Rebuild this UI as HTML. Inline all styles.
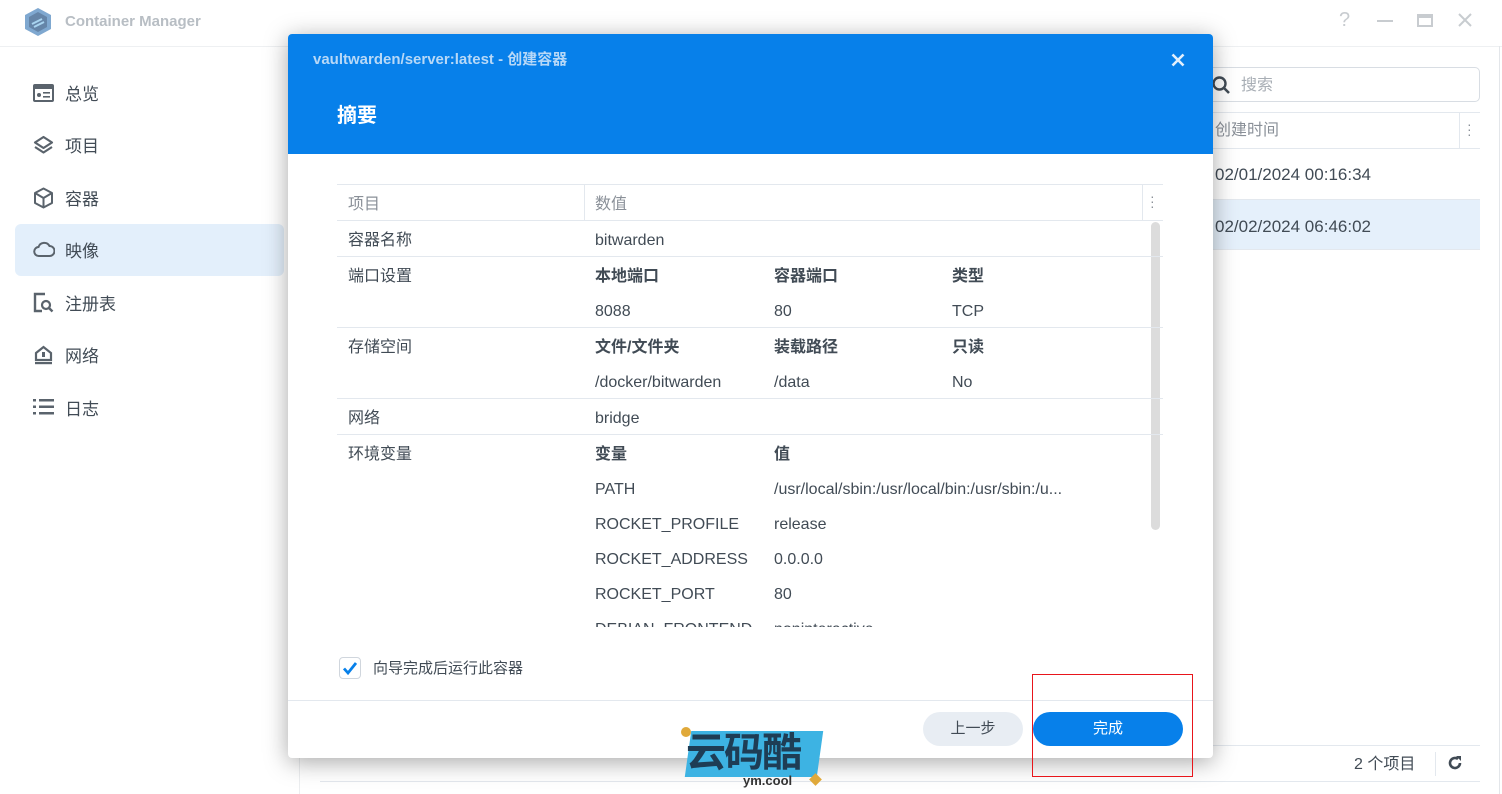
<!DOCTYPE html>
<html><head><meta charset="utf-8">
<style>
*{margin:0;padding:0;box-sizing:border-box}
body{width:1502px;height:794px;overflow:hidden;background:#fff;font-family:"Liberation Sans","Noto Sans CJK SC",sans-serif;color:#414b55;position:relative}
.a{position:absolute;white-space:nowrap}
.nav{position:absolute;left:65px;font-size:17px;color:#414b55;line-height:22px;transform:translateY(2px)}
.ic{position:absolute;left:33px}
.t{position:absolute;font-size:16px;color:#414b55;white-space:nowrap;line-height:20px;transform:translateY(2px)}
.b{font-weight:bold}
.hl{position:absolute;left:337px;width:826px;height:1px;background:#e3e8ee}
</style></head><body>
<!-- title bar -->
<svg class="a" style="left:24px;top:7px" width="28" height="30" viewBox="0 0 28 30"><polygon points="14,1 27,8 27,22 14,29 1,22 1,8" fill="#7fa8d0"/><polygon points="14,5 23,10 23,20 14,25 5,20 5,10" fill="#6585a8"/><path d="M8 17 L18 12 M10 20 L20 15" stroke="#a8d4f0" stroke-width="2"/></svg>
<div class="a" style="left:65px;top:13px;font-size:15px;font-weight:bold;color:#b8bec4">Container Manager</div>
<div class="a" style="left:1339px;top:9px;font-size:20px;color:#c8ccd0">?</div>
<div class="a" style="left:1377px;top:20px;width:16px;height:2px;background:#c8ccd0"></div>
<div class="a" style="left:1417px;top:14px;width:16px;height:13px;border:2px solid #c8ccd0;border-top-width:4px"></div>
<svg class="a" style="left:1458px;top:13px" width="14" height="14"><path d="M1 1L13 13M13 1L1 13" stroke="#c8ccd0" stroke-width="2"/></svg>
<div class="a" style="left:0;top:46px;width:1502px;height:1px;background:#eef0f2"></div>
<div class="a" style="left:1499px;top:46px;width:1px;height:748px;background:#e3e6ea"></div>
<!-- sidebar -->
<div class="a" style="left:15px;top:224px;width:269px;height:52px;background:#e3effb;border-radius:6px"></div>
<svg class="ic" style="top:84px" width="21" height="18"><rect x="0" y="0" width="21" height="18" rx="2" fill="#5a636c"/><rect x="2" y="5" width="17" height="11" fill="#fff"/><circle cx="6" cy="11" r="2" fill="#5a636c"/><rect x="10" y="8" width="7" height="1.6" fill="#5a636c"/><rect x="10" y="12" width="7" height="1.6" fill="#5a636c"/></svg>
<div class="nav" style="top:82px">总览</div>
<svg class="ic" style="top:135px" width="21" height="20"><path d="M10.5 2L19 7.5 10.5 13 2 7.5Z" fill="none" stroke="#5a636c" stroke-width="2.2" stroke-linejoin="round"/><path d="M2 12L10.5 17.5 19 12" fill="none" stroke="#5a636c" stroke-width="2.2" stroke-linejoin="round"/></svg>
<div class="nav" style="top:134px">项目</div>
<svg class="ic" style="top:187px" width="21" height="22"><path d="M10.5 1.5L19 6v10l-8.5 4.5L2 16V6Z M2 6l8.5 5 8.5-5 M10.5 11v9.5" fill="none" stroke="#5a636c" stroke-width="2" stroke-linejoin="round"/></svg>
<div class="nav" style="top:187px">容器</div>
<svg class="ic" style="top:240px" width="22" height="18"><path d="M6 16a4.5 4.5 0 0 1-0.5-9A6 6 0 0 1 16.5 6a4.8 4.8 0 0 1 0 10Z" fill="none" stroke="#5a636c" stroke-width="2"/></svg>
<div class="nav" style="top:239px">映像</div>
<svg class="ic" style="top:292px" width="21" height="21"><path d="M12 2H2v17h7" fill="none" stroke="#5a636c" stroke-width="2.4"/><circle cx="13" cy="13" r="4" fill="none" stroke="#5a636c" stroke-width="2.2"/><path d="M16 16l3.5 3.5" stroke="#5a636c" stroke-width="2.4"/></svg>
<div class="nav" style="top:292px">注册表</div>
<svg class="ic" style="top:344px" width="21" height="21"><path d="M3 9L10.5 3 18 9v7H3Z" fill="none" stroke="#5a636c" stroke-width="2.2"/><rect x="9" y="8" width="3" height="5" fill="#5a636c"/><rect x="2" y="18" width="17" height="2.2" fill="#5a636c"/></svg>
<div class="nav" style="top:344px">网络</div>
<svg class="ic" style="top:399px" width="21" height="16"><g fill="#5a636c"><rect x="0" y="0" width="3" height="2.5"/><rect x="6" y="0" width="15" height="2.5"/><rect x="0" y="6.5" width="3" height="2.5"/><rect x="6" y="6.5" width="15" height="2.5"/><rect x="0" y="13" width="3" height="2.5"/><rect x="6" y="13" width="15" height="2.5"/></g></svg>
<div class="nav" style="top:397px">日志</div>
<div class="a" style="left:299px;top:46px;width:1px;height:748px;background:#eceef0"></div>
<!-- right background content -->
<div class="a" style="left:1180px;top:67px;width:300px;height:35px;border:1px solid #d8dde3;border-radius:5px"></div>
<svg class="a" style="left:1212px;top:76px" width="18" height="18"><circle cx="7.5" cy="7.5" r="6" fill="none" stroke="#414b55" stroke-width="2.4"/><path d="M12 12l5 5" stroke="#414b55" stroke-width="2.6"/></svg>
<div class="t" style="left:1241px;top:74px;color:#a8aeb5">搜索</div>
<div class="a" style="left:1180px;top:112px;width:300px;height:1px;background:#e3e8ee"></div>
<div class="t" style="left:1215px;top:119px;color:#8a9098">创建时间</div>
<div class="a" style="left:1459px;top:113px;width:1px;height:35px;background:#e3e8ee"></div>
<div class="a" style="left:1467px;top:122px;font-size:14px;color:#8a9098;line-height:5px">·<br>·<br>·</div>
<div class="a" style="left:1180px;top:148px;width:300px;height:1px;background:#e3e8ee"></div>
<div class="a" style="left:1215px;top:165px;font-size:17px;line-height:20px">02/01/2024 00:16:34</div>
<div class="a" style="left:1180px;top:199px;width:300px;height:51px;background:#e5f0fb;border-top:1px solid #e3e8ee;border-bottom:1px solid #e3e8ee"></div>
<div class="a" style="left:1215px;top:217px;font-size:17px;line-height:20px">02/02/2024 06:46:02</div>
<div class="a" style="left:300px;top:745px;width:1180px;height:1px;background:#e3e8ee"></div>
<div class="t" style="left:1354px;top:753px">2 个项目</div>
<div class="a" style="left:1435px;top:752px;width:1px;height:24px;background:#e3e8ee"></div>
<svg class="a" style="left:1447px;top:755px" width="16" height="16"><path d="M13 8A5 5 0 1 1 11 4" fill="none" stroke="#414b55" stroke-width="2.6"/><path d="M9 1h5v5z" fill="#414b55"/></svg>
<div class="a" style="left:320px;top:781px;width:1160px;height:1px;background:#e3e8ee"></div>
<!-- modal -->
<div class="a" style="left:288px;top:34px;width:925px;height:724px;background:#fff;border-radius:4px;box-shadow:0 4px 24px rgba(0,0,0,.35);overflow:hidden">
 <div class="a" style="left:0;top:0;width:925px;height:120px;background:#0780ea"></div>
 <div class="a" style="left:25px;top:16px;font-size:15px;font-weight:bold;color:#b7d8f7;line-height:20px">vaultwarden/server:latest - 创建容器</div>
 <svg class="a" style="left:883px;top:19px" width="14" height="14"><path d="M1.5 1.5L12.5 12.5M12.5 1.5L1.5 12.5" stroke="#e2effc" stroke-width="2.6"/></svg>
 <div class="a" style="left:49px;top:68px;font-size:20px;font-weight:bold;color:#fff;line-height:28px">摘要</div>
 <div class="a" style="left:0;top:666px;width:925px;height:1px;background:#e3e8ee"></div>
</div>
<!-- table -->
<div class="hl" style="top:184px"></div>
<div class="t" style="left:348px;top:193px;color:#8a9098">项目</div>
<div class="a" style="left:584px;top:185px;width:1px;height:35px;background:#e3e8ee"></div>
<div class="t" style="left:595px;top:193px;color:#8a9098">数值</div>
<div class="a" style="left:1142px;top:185px;width:1px;height:35px;background:#e3e8ee"></div>
<div class="a" style="left:1150px;top:194px;font-size:14px;color:#8a9098;line-height:5px">·<br>·<br>·</div>
<div class="hl" style="top:220px"></div>
<div class="a" style="left:1151px;top:222px;width:9px;height:308px;background:#dcdcdc;border-radius:5px"></div>
<div style="position:absolute;left:0;top:0;width:1502px;height:627px;overflow:hidden">
<div class="t" style="left:348px;top:229px">容器名称</div><div class="t" style="left:595px;top:229px">bitwarden</div>
<div class="hl" style="top:256px"></div>
<div class="t" style="left:348px;top:265px">端口设置</div>
<div class="t b" style="left:595px;top:265px">本地端口</div><div class="t b" style="left:774px;top:265px">容器端口</div><div class="t b" style="left:952px;top:265px">类型</div>
<div class="t" style="left:595px;top:300px">8088</div><div class="t" style="left:774px;top:300px">80</div><div class="t" style="left:952px;top:300px">TCP</div>
<div class="hl" style="top:327px"></div>
<div class="t" style="left:348px;top:336px">存储空间</div>
<div class="t b" style="left:595px;top:336px">文件/文件夹</div><div class="t b" style="left:774px;top:336px">装载路径</div><div class="t b" style="left:952px;top:336px">只读</div>
<div class="t" style="left:595px;top:371px">/docker/bitwarden</div><div class="t" style="left:774px;top:371px">/data</div><div class="t" style="left:952px;top:371px">No</div>
<div class="hl" style="top:398px"></div>
<div class="t" style="left:348px;top:407px">网络</div><div class="t" style="left:595px;top:407px">bridge</div>
<div class="hl" style="top:434px"></div>
<div class="t" style="left:348px;top:443px">环境变量</div>
<div class="t b" style="left:595px;top:443px">变量</div><div class="t b" style="left:774px;top:443px">值</div>
<div class="t" style="left:595px;top:478px">PATH</div><div class="t" style="left:774px;top:478px">/usr/local/sbin:/usr/local/bin:/usr/sbin:/u...</div>
<div class="t" style="left:595px;top:513px">ROCKET_PROFILE</div><div class="t" style="left:774px;top:513px">release</div>
<div class="t" style="left:595px;top:548px">ROCKET_ADDRESS</div><div class="t" style="left:774px;top:548px">0.0.0.0</div>
<div class="t" style="left:595px;top:583px">ROCKET_PORT</div><div class="t" style="left:774px;top:583px">80</div>
<div class="t" style="left:595px;top:618px">DEBIAN_FRONTEND</div><div class="t" style="left:774px;top:618px">noninteractive</div>
</div>
<!-- checkbox -->
<div class="a" style="left:339px;top:657px;width:22px;height:22px;border:1px solid #d0d6dd;border-radius:4px"></div>
<svg class="a" style="left:341px;top:659px" width="18" height="18"><path d="M3 9.5l4 4.5 8-10" fill="none" stroke="#0780ea" stroke-width="2.8"/></svg>
<div class="a" style="left:373px;top:659px;font-size:15px;line-height:20px">向导完成后运行此容器</div>
<!-- buttons -->
<div class="a" style="left:923px;top:712px;width:100px;height:34px;border-radius:17px;background:#e8edf3;text-align:center;line-height:34px;font-size:15px">上一步</div>
<div class="a" style="left:1033px;top:712px;width:150px;height:34px;border-radius:17px;background:#0780ea;text-align:center;line-height:34px;font-size:15px;color:#fff">完成</div>
<div class="a" style="left:1032px;top:674px;width:161px;height:103px;border:1px solid #e8151b"></div>
<!-- watermark -->
<div class="a" style="left:688px;top:731px;width:132px;height:46px;background:#3db3e3;transform:skewX(-8deg)"></div>
<div class="a" style="left:681px;top:727px;width:10px;height:10px;border-radius:50%;background:#e0a93a"></div>
<div class="a" style="left:686px;top:728px;font-size:40px;font-weight:bold;color:#1e3d55;letter-spacing:-2px;line-height:50px">云码酷</div>
<div class="a" style="left:743px;top:773px;font-size:13px;font-weight:bold;color:#333">ym.cool</div>
<div class="a" style="left:811px;top:775px;width:9px;height:9px;background:#e0a93a;transform:rotate(45deg)"></div>
</body></html>
